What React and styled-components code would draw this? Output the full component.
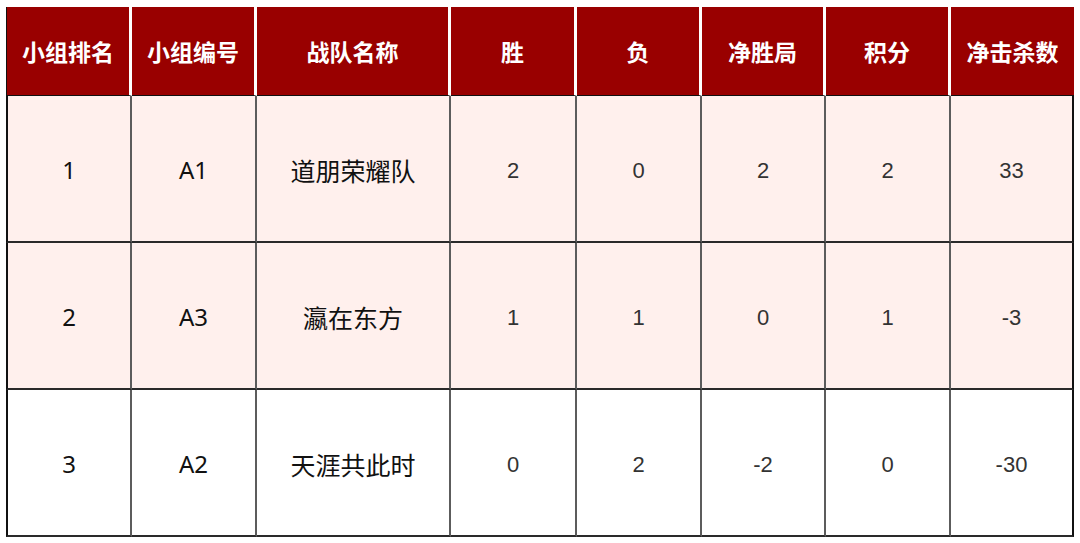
import React from "react";
import styled, { createGlobalStyle } from "styled-components";

const GlobalStyle = createGlobalStyle`
  body {
    margin: 0;
    background: #fff;
    font-family: "Noto Sans CJK SC", "Noto Sans", sans-serif;
  }
`;

const columns = [
  { title: "小组排名", width: 126, kind: "latin" },
  { title: "小组编号", width: 125, kind: "latin" },
  { title: "战队名称", width: 194, kind: "cjk" },
  { title: "胜", width: 126, kind: "num" },
  { title: "负", width: 125, kind: "num" },
  { title: "净胜局", width: 124, kind: "num" },
  { title: "积分", width: 125, kind: "num" },
  { title: "净击杀数", width: 123, kind: "num" },
];

const teams = [
  { rank: 1, group: "A1", name: "道朋荣耀队", win: 2, lose: 0, net: 2, points: 2, kills: 33, shaded: true },
  { rank: 2, group: "A3", name: "瀛在东方", win: 1, lose: 1, net: 0, points: 1, kills: -3, shaded: true },
  { rank: 3, group: "A2", name: "天涯共此时", win: 0, lose: 2, net: -2, points: 0, kills: -30, shaded: false },
];

const Page = styled.div`
  padding: 7px 0 0 6px;
`;

const Table = styled.table`
  width: 1068px;
  table-layout: fixed;
  border-collapse: separate;
  border-spacing: 0;
  box-shadow: 0 2px 0 -1px #c8c8c8;
`;

const HeadCell = styled.th`
  box-sizing: border-box;
  height: 89px;
  padding: 0;
  background: #990000;
  color: #fff;
  font-family: "Noto Sans CJK SC", sans-serif;
  font-weight: 700;
  font-size: 23px;
  text-align: center;
  vertical-align: middle;
  border-bottom: 1px solid #111;
  border-right: 3px solid #fff;
  &:first-child {
    border-left: 1px solid #111;
  }
  &:last-child {
    border-right: none;
  }
`;

const Row = styled.tr`
  background: ${(p) => (p.$shaded ? "#fff0ed" : "#fff")};
`;

const fonts = {
  latin: `font-family: "Noto Sans", "Open Sans", sans-serif; font-size: 24px; color: #111; padding-top: 2px;`,
  cjk: `font-family: "Noto Sans CJK SC", sans-serif; font-size: 25px; color: #111; padding-top: 2px;`,
  num: `font-family: "Liberation Sans", Arial, sans-serif; font-size: 22px; color: #333; padding-top: 5px;`,
};

const Cell = styled.td`
  box-sizing: border-box;
  height: 147px;
  padding: 0;
  text-align: center;
  vertical-align: middle;
  ${(p) => fonts[p.$kind]}
  border-bottom: 2px solid #2a2a2a;
  border-right: 2px solid #5c5c5c;
  &:first-child {
    border-left: 2px solid #111;
  }
  &:last-child {
    border-right: 2px solid #111;
  }
`;

export default function App() {
  return (
    <>
      <GlobalStyle />
      <Page>
        <Table>
          <colgroup>
            {columns.map((c) => (
              <col key={c.title} style={{ width: c.width }} />
            ))}
          </colgroup>
          <thead>
            <tr>
              {columns.map((c) => (
                <HeadCell key={c.title}>{c.title}</HeadCell>
              ))}
            </tr>
          </thead>
          <tbody>
            {teams.map((t) => {
              const values = [t.rank, t.group, t.name, t.win, t.lose, t.net, t.points, t.kills];
              return (
                <Row key={t.group} $shaded={t.shaded}>
                  {values.map((v, i) => (
                    <Cell key={i} $kind={columns[i].kind}>
                      {v}
                    </Cell>
                  ))}
                </Row>
              );
            })}
          </tbody>
        </Table>
      </Page>
    </>
  );
}
